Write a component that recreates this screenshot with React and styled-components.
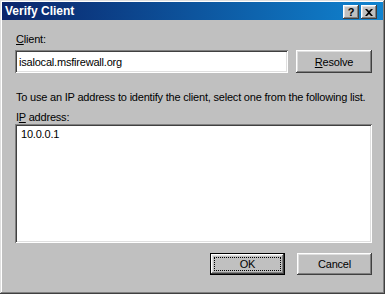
import React from 'react';
import styled, { createGlobalStyle } from 'styled-components';

const GlobalStyle = createGlobalStyle`
  html, body {
    margin: 0;
    padding: 0;
    background: #c0c0c0;
  }
  * {
    box-sizing: border-box;
  }
`;

const sunken = `
  box-shadow: inset 1px 1px #808080, inset -1px -1px #ffffff,
    inset 2px 2px #404040, inset -2px -2px #dfdfdf;
`;

const raised = `
  box-shadow: inset -1px -1px #404040, inset 1px 1px #ffffff,
    inset -2px -2px #808080, inset 2px 2px #dfdfdf;
`;

const Window = styled.div`
  width: 385px;
  height: 294px;
  padding: 2px;
  background: #c0c0c0;
  font-family: Tahoma, 'Liberation Sans', Arial, sans-serif;
  font-size: 11px;
  letter-spacing: -0.2px;
  color: #000;
  display: flex;
  flex-direction: column;
  box-shadow: inset -1px -1px #404040, inset 1px 1px #dfdfdf,
    inset -2px -2px #808080, inset 2px 2px #ffffff;
`;

const TitleBar = styled.div`
  height: 18px;
  display: flex;
  align-items: center;
  justify-content: space-between;
  padding: 0 6px 0 3px;
  background: linear-gradient(to right, #0a246a, #1084d0);
`;

const Title = styled.span`
  color: #fff;
  font-weight: bold;
  font-size: 12px;
  letter-spacing: 0;
`;

const TitleButtons = styled.div`
  display: flex;
  gap: 2px;
  padding-top: 2px;
`;

const TitleButton = styled.button`
  width: 16px;
  height: 14px;
  padding: 0;
  border: none;
  background: #c0c0c0;
  display: flex;
  align-items: center;
  justify-content: center;
  font-family: 'Liberation Sans', Arial, sans-serif;
  font-weight: bold;
  font-size: 11px;
  line-height: 1;
  ${raised}
`;

const Content = styled.div`
  flex: 1;
  display: flex;
  flex-direction: column;
  padding: 13px 11px 0 13px;
`;

const Label = styled.div`
  line-height: 13px;
  margin-top: ${(p) => p.$top || 0}px;
  margin-left: 1px;
`;

const Key = styled.span`
  text-decoration: underline;
  text-underline-offset: 1px;
`;

const ClientRow = styled.div`
  display: flex;
  gap: 8px;
  margin-top: 4px;
`;

const TextBox = styled.div`
  width: 273px;
  height: 23px;
  background: #fff;
  padding: 0 4px;
  display: flex;
  align-items: center;
  ${sunken}
`;

const Button = styled.button`
  width: ${(p) => p.$w || 75}px;
  height: ${(p) => p.$h || 22}px;
  padding: 0;
  border: none;
  background: #c0c0c0;
  font-family: inherit;
  font-size: 11px;
  letter-spacing: inherit;
  color: #000;
  display: flex;
  align-items: center;
  justify-content: center;
  position: relative;
  ${raised}
  ${(p) =>
    p.$default &&
    `
    box-shadow: inset 0 0 0 1px #000, inset -2px -2px #404040,
      inset 2px 2px #ffffff, inset -3px -3px #808080, inset 3px 3px #dfdfdf;
  `}
`;

const FocusRing = styled.span`
  position: absolute;
  inset: 4px;
  border: 1px dotted #000;
`;

const Info = styled.div`
  line-height: 13px;
  margin-top: 18px;
  margin-left: 1px;
  white-space: nowrap;
`;

const ListBox = styled.div`
  height: 119px;
  background: #fff;
  padding: 4px 6px;
  line-height: 13px;
  ${sunken}
`;

const Footer = styled.div`
  display: flex;
  justify-content: flex-end;
  gap: 12px;
  margin-top: 10px;
`;

const App = () => {
  return (
    <>
      <GlobalStyle />
      <Window>
        <TitleBar>
          <Title>Verify Client</Title>
          <TitleButtons>
            <TitleButton>?</TitleButton>
            <TitleButton>
              <svg width="8" height="7" viewBox="0 0 8 7">
                <path d="M0 0h2l2 2 2-2h2L5 3.5 8 7H6L4 5 2 7H0l3-3.5z" fill="#000" />
              </svg>
            </TitleButton>
          </TitleButtons>
        </TitleBar>
        <Content>
          <Label>
            <Key>C</Key>lient:
          </Label>
          <ClientRow>
            <TextBox>isalocal.msfirewall.org</TextBox>
            <Button $w={76} $h={23}>
              <span>
                <Key>R</Key>esolve
              </span>
            </Button>
          </ClientRow>
          <Info>To use an IP address to identify the client, select one from the following list.</Info>
          <Label $top={7}>
            I<Key>P</Key> address:
          </Label>
          <ListBox>10.0.0.1</ListBox>
          <Footer>
            <Button $default>
              <FocusRing />
              OK
            </Button>
            <Button>Cancel</Button>
          </Footer>
        </Content>
      </Window>
    </>
  );
};

export default App;
